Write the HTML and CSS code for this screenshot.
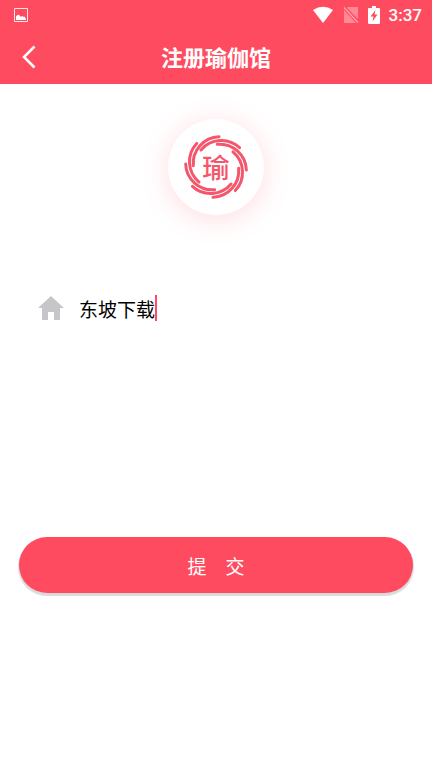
FILE: index.html
```html
<!DOCTYPE html>
<html lang="zh-CN">

<head>
  <meta charset="UTF-8" />
  <meta name="viewport" content="width=device-width, initial-scale=1.0" />
  <title>注册瑜伽馆</title>
  <link rel="stylesheet" href="styles.css">
</head>

<body>
  <header class="header">
    <div class="statusBar">
      <svg class="picture" width="16" height="16" viewBox="0 0 16 16">
        <path d="M1.500 1.500h13v13h-13z" fill="none" stroke="#fff" stroke-opacity=".85" />
        <path d="M3 13V9.500q2-3 4-.5l1 1 1-1q1 0 1.500 1l1-.5L13 12v1z" fill="#fff" />
      </svg>
      <div class="statusIcons">
        <svg width="22" height="18" viewBox="0 0 22 18">
          <path d="M1 4Q11-2.500 21 4L11 17z" fill="#fff" />
        </svg>
        <svg width="16" height="18" viewBox="0 0 16 18">
          <path d="M5 1h10v12L4 2zM1 4l12 13H1z" fill="#fff" opacity=".35" />
          <path d="M1 1.500l14 15" stroke="#fff" stroke-width="1.200" opacity=".5" />
        </svg>
        <svg width="12" height="18" viewBox="0 0 12 18">
          <path d="M4 0h4v2h3q1 0 1 1v14q0 1-1 1H1q-1 0-1-1V3q0-1 1-1h3z" fill="#fff" />
          <path d="M7.500 4L2.500 10.500h3L4.500 15.500l5-7h-3z" fill="#ff4b5f" />
        </svg>
        <span class="time">3:37</span>
      </div>
    </div>
    <div class="navBar">
      <button class="back" type="button" aria-label="返回">
        <svg width="16" height="24" viewBox="0 0 16 24">
          <path d="M13.500 1.500L3 12l10.500 10.500" fill="none" stroke="#fff" stroke-width="2.500" />
        </svg>
      </button>
      <h1>注册瑜伽馆</h1>
    </div>
  </header>

  <main>
    <div class="logo">
      <svg width="66" height="66" viewBox="-99 -99 198 198">
        <defs>
          <path id="arc" d="M9-91A80 80 0 0 0-68-4" />
        </defs>
        <g class="ring">
          <use href="#arc" />
          <use href="#arc" transform="rotate(45)" />
          <use href="#arc" transform="rotate(90)" />
          <use href="#arc" transform="rotate(135)" />
          <use href="#arc" transform="rotate(180)" />
          <use href="#arc" transform="rotate(225)" />
          <use href="#arc" transform="rotate(270)" />
          <use href="#arc" transform="rotate(315)" />
        </g>
        <text class="logoText" x="0" y="32" text-anchor="middle">瑜</text>
      </svg>
    </div>

    <form class="registerForm">
      <div class="field">
        <label for="studioName" aria-label="瑜伽馆名称">
          <svg width="26" height="26" viewBox="0 0 26 26">
            <path d="M13 1l13 12h-4v12h-6v-8h-6v8H4V13H0z" fill="#c6c6ca" />
          </svg>
        </label>
        <input id="studioName" type="text" value="东坡下载" />
        <span class="caret"></span>
      </div>
      <button class="submit" type="submit">提　交</button>
    </form>
  </main>
</body>

</html>
```
FILE: styles.css
```css
* {
  margin: 0;
  padding: 0;
  box-sizing: border-box;
}

body {
  min-height: 100vh;
  font-family: "Roboto", "Noto Sans CJK SC", sans-serif;
  background-color: #fff;
}

svg {
  display: block;
}

/* header */
.header {
  background-color: #ff4b5f;
  color: #fff;
}

.statusBar {
  display: flex;
  justify-content: space-between;
  align-items: center;
  height: 30px;
  padding: 0 10px 0 13px;
}

.statusIcons {
  display: flex;
  align-items: center;
  gap: 9px;
}

.time {
  font-size: 17px;
  font-weight: 500;
  line-height: 30px;
}

.navBar {
  display: grid;
  grid-template-columns: 56px 1fr 56px;
  align-items: center;
  height: 54px;
}

.back {
  padding-left: 21px;
  border: none;
  background: none;
  cursor: pointer;
}

.navBar h1 {
  padding-top: 4px;
  font-size: 22px;
  line-height: 32px;
  text-align: center;
}

/* logo */
.logo {
  display: flex;
  justify-content: center;
  align-items: center;
  width: 96px;
  height: 96px;
  margin: 35px auto 0;
  border-radius: 50%;
  background-color: #fff;
  box-shadow: 0 4px 28px rgba(255, 75, 95, 0.2);
}

.ring {
  fill: none;
  stroke: #f4566c;
  stroke-width: 9;
  stroke-linecap: round;
}

.logoText {
  font-size: 82px;
  font-weight: 500;
  fill: #f4566c;
}

/* form */
.registerForm {
  padding: 72px 19px 24px;
}

.field {
  display: flex;
  align-items: center;
  height: 42px;
  padding-left: 19px;
}

.field input {
  field-sizing: content;
  margin-left: 15px;
  padding-top: 6px;
  border: none;
  outline: none;
  background: none;
  color: #000;
  font-family: inherit;
  font-size: 19px;
  line-height: 28px;
}

.caret {
  width: 2px;
  height: 26px;
  background-color: #ff4b5f;
}

.submit {
  display: block;
  width: 100%;
  height: 56px;
  margin-top: 208px;
  border: none;
  border-radius: 28px;
  background-color: #ff4b5f;
  box-shadow: 0 2px 1px 1px rgba(0, 0, 0, 0.15);
  color: #fff;
  font-family: inherit;
  font-size: 19px;
  cursor: pointer;
}
```
